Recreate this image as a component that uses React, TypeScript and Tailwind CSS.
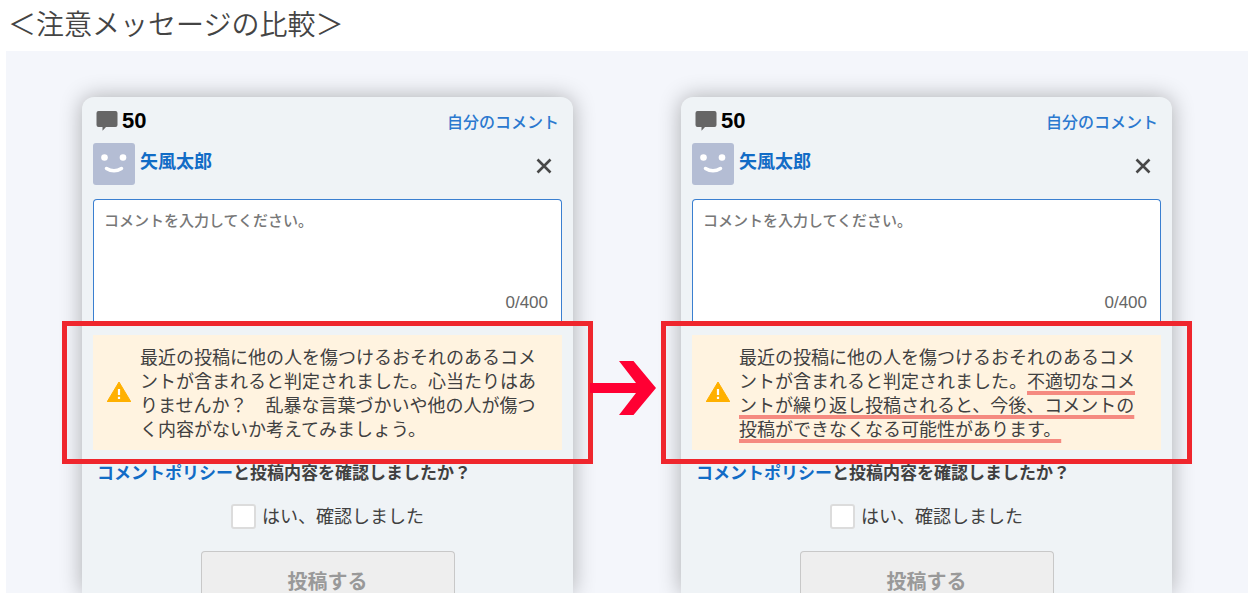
import { useId } from 'react'
import type { ReactNode } from 'react'

// ── Icons ────────────────────────────────
function CommentIcon() {
  return (
    <svg width="22" height="20" viewBox="0 0 22 20" fill="#666" aria-hidden="true">
      <path d="M2.500 0h17A2 2 0 0 1 21.500 2v12a2 2 0 0 1-2 2H10L6.500 19.800V16h-4a2 2 0 0 1-2-2V2a2 2 0 0 1 2-2z" />
    </svg>
  )
}

function Avatar() {
  return (
    <svg className="shrink-0" width="42" height="42" viewBox="0 0 42 42" aria-hidden="true">
      <rect width="42" height="42" rx="3" fill="#b4bdd4" />
      <circle cx="11.500" cy="14.500" r="3.300" fill="#fff" />
      <circle cx="30" cy="14.500" r="3.300" fill="#fff" />
      <path d="M13.500 25.500q7.500 4.500 15 0" fill="none" stroke="#fff" strokeWidth="3.500" strokeLinecap="round" />
    </svg>
  )
}

function CloseIcon() {
  return (
    <svg width="16" height="16" viewBox="0 0 16 16" aria-hidden="true">
      <path d="M1.500 1.500l13 13M14.500 1.500l-13 13" stroke="#484848" strokeWidth="2.600" />
    </svg>
  )
}

function WarningIcon() {
  return (
    <svg className="shrink-0" width="24" height="20" viewBox="0 0 24 20" aria-hidden="true">
      <path d="M12 0l12 20H0z" fill="#ffb000" stroke="#ffb000" strokeLinejoin="round" />
      <path d="M12 7v6M12 14.800v2.200" stroke="#fff" strokeWidth="2.200" />
    </svg>
  )
}

function ArrowIcon() {
  return (
    <svg width="66" height="54" viewBox="0 0 66 54" fill="#ff0033" aria-hidden="true">
      <path d="M0 22h46L29 0h14.500L66 27 43.500 54H29l17-22H0z" />
    </svg>
  )
}

// ── Comment form ─────────────────────────
function CommentForm({ children }: { children: ReactNode }) {
  const id = useId()
  return (
    <form className="min-w-0 flex-1 rounded-t-xl bg-[#eff3f6] px-[11px] pt-3 text-[#404040] shadow-[0_0_22px_rgba(0,0,0,0.3)]">
      <div className="flex h-6 items-center justify-between pr-[3px] pl-[3px]">
        <div className="flex items-center gap-1">
          <CommentIcon />
          <span className="font-['Liberation_Sans',sans-serif] text-[22px] leading-6 font-bold text-black">50</span>
        </div>
        <a href="#comments" className="text-base leading-6 font-medium text-[#2a78cf]">自分のコメント</a>
      </div>

      <div className="mt-2.5 flex items-start gap-[5px]">
        <Avatar />
        <a href="#profile" className="text-lg leading-[34px] font-bold text-[#126cc6]">矢風太郎</a>
        <button type="button" aria-label="閉じる" className="mr-2.5 ml-auto self-center pt-1">
          <CloseIcon />
        </button>
      </div>

      {/* Text box, its lower edge meets the highlight frame */}
      <div className="mt-3.5 flex h-[122px] flex-col rounded-t-[4px] border border-b-0 border-[#3a7fd0] bg-white">
        <textarea
          aria-label="コメント"
          placeholder="コメントを入力してください。"
          className="w-full flex-1 resize-none px-2.5 pt-2 text-[15px] leading-6 font-medium outline-none placeholder:text-[#777]"
        />
        <span className="self-end pr-[13px] pb-1.5 font-['Liberation_Sans',sans-serif] text-[17px] leading-6 text-[#666]">0/400</span>
      </div>

      <div className="-mx-[31px] border-5 border-[#ef262d] px-[26px] py-[9px]">
        <div role="alert" className="flex items-center gap-[9px] bg-[#fff3e0] pt-[9px] pr-5 pb-2.5 pl-3.5">
          <WarningIcon />
          <p className="text-lg leading-6">{children}</p>
        </div>
      </div>

      <p className="pl-1 text-[17px] leading-4 font-bold">
        <a href="#policy" className="text-[#126cc6]">コメントポリシー</a>
        と投稿内容を確認しましたか？
      </p>

      <div className="mt-6 flex items-center justify-center gap-1.5">
        <input
          id={id}
          type="checkbox"
          className="size-[25px] appearance-none rounded-[3px] border-2 border-[#dcdcdc] bg-white checked:bg-[#126cc6]"
        />
        <label htmlFor={id} className="text-lg leading-5 pb-1">はい、確認しました</label>
      </div>

      <button
        type="submit"
        disabled
        className="mx-auto mt-[22px] block h-[42px] w-[254px] rounded-t-[4px] border border-b-0 border-[#c8c8c8] bg-[#eee] pt-4 text-xl leading-6 font-bold text-[#999]"
      >
        投稿する
      </button>
    </form>
  )
}

// ── Page ─────────────────────────────────
export default function App() {
  return (
    <main className="bg-white px-1.5 pb-1.5 font-['Noto_Sans_CJK_JP',sans-serif]" lang="ja">
      <h1 className="pt-[3px] pb-2 pl-0.5 text-[28px] leading-10 font-[350] text-[#444]">＜注意メッセージの比較＞</h1>

      <div className="flex items-start overflow-hidden bg-[#f4f6fb] px-19 pt-[46px]">
        <CommentForm>
          最近の投稿に他の人を傷つけるおそれのあるコメントが含まれると判定されました。心当たりはありませんか？　乱暴な言葉づかいや他の人が傷つく内容がないか考えてみましょう。
        </CommentForm>

        <div className="w-[108px] shrink-0 pt-[264px] pl-[17px]">
          <ArrowIcon />
        </div>

        <CommentForm>
          最近の投稿に他の人を傷つけるおそれのあるコメントが含まれると判定されました。
          <span className="underline decoration-[#f58a80] decoration-4 underline-offset-3 [text-decoration-skip-ink:none]">
            不適切なコメントが繰り返し投稿されると、今後、コメントの投稿ができなくなる可能性があります。
          </span>
        </CommentForm>
      </div>
    </main>
  )
}
